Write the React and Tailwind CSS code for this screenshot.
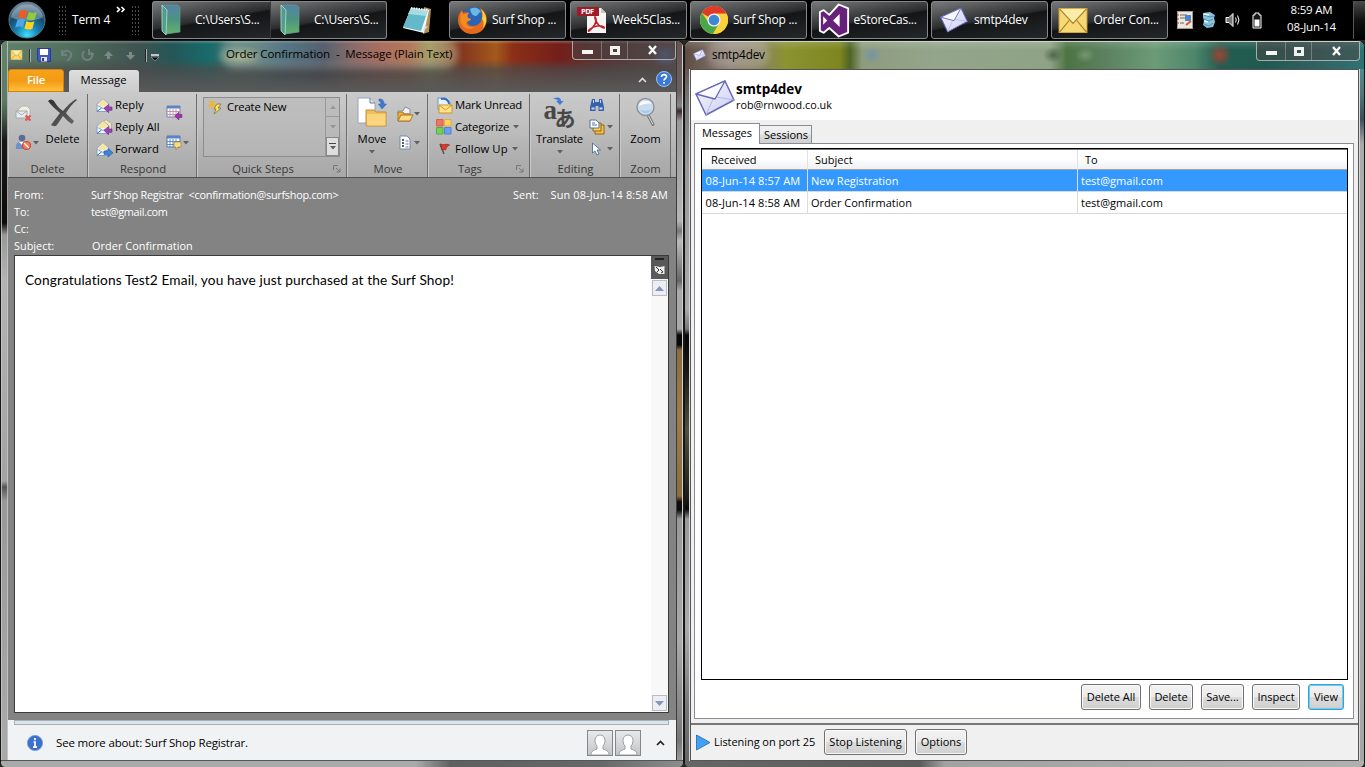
import React from "react";

const UI = "font-['Open_Sans','Noto_Sans',sans-serif]";

/* ---------- taskbar icons ---------- */

function StartOrb() {
  return (
    <svg width="38" height="38" viewBox="0 0 38 38" className="shrink-0">
      <defs>
        <radialGradient id="orb" cx="50%" cy="92%" r="85%">
          <stop offset="0" stopColor="#3fe0ff" />
          <stop offset="0.35" stopColor="#1786b8" />
          <stop offset="0.7" stopColor="#174a70" />
          <stop offset="1" stopColor="#6f8596" />
        </radialGradient>
      </defs>
      <circle cx="19" cy="19" r="18" fill="url(#orb)" stroke="#5d7688" />
      <path d="M3 16a16.500 16.500 0 0 1 32 0c-8 5-24 5-32 0z" fill="#dbe8ee" opacity="0.35" />
      <path d="M12 10c3-1.600 5-1.300 7.500.3l-2 7.500c-2.500-1.400-4.700-1.500-7.700-.2z" fill="#ef5a24" />
      <path d="M20.800 10.800c2.600 1.500 5 1.500 8 .2l-2 7.400c-3 1.300-5.400 1.200-8-.2z" fill="#95c93d" />
      <path d="M9.300 19c3-1.400 5.200-1.200 7.700.2l-2 7.500c-2.500-1.500-4.800-1.500-7.800 0z" fill="#4ea6e6" />
      <path d="M18.400 20c2.500 1.500 5 1.600 8 .2l-2 7.500c-3 1.300-5.300 1.100-8-.3z" fill="#ffd21f" />
    </svg>
  );
}

function FolderIcon() {
  return (
    <svg width="20" height="32" viewBox="0 0 20 32">
      <defs>
        <linearGradient id="fold" x1="0" y1="0" x2="0" y2="1">
          <stop offset="0" stopColor="#5583a6" />
          <stop offset="0.5" stopColor="#4b9481" />
          <stop offset="1" stopColor="#66b36d" />
        </linearGradient>
      </defs>
      <path d="M1 1l15 0 3 2v25l-14 2z" fill="url(#fold)" stroke="#5f9c94" strokeWidth="0.7" />
      <path d="M1 1l5 5-1 25-4-4z" fill="#4f9d8a" stroke="#b7e2d0" strokeWidth="0.8" />
    </svg>
  );
}

function NotepadIcon() {
  return (
    <svg width="32" height="30" viewBox="0 0 32 30">
      <path d="M23 2l7 2-2 23-6 2z" fill="#b58f58" />
      <path d="M10 3l18 2-5 23-21-5z" fill="#f4fafa" />
      <path d="M10 3l17 2-7 21-18-4z" fill="#63b8c9" />
      <path d="M10 3l17 2-2 6-18-2z" fill="#a9dbe4" />
      <path d="M22 27l1-5 4-1z" fill="#dbe2e2" />
      <path d="M10 3l17 2" stroke="#eef8f8" strokeWidth="2" strokeDasharray="1.500 1" />
    </svg>
  );
}

function FirefoxIcon() {
  return (
    <svg width="32" height="30" viewBox="0 0 32 30" className="-ml-px">
      <circle cx="17" cy="14" r="12" fill="#2b64b4" />
      <path d="M13 4c5-3 10 0 11 3-3 0-2 3-5 4-3 0-5-2-6-7z" fill="#69b8e4" />
      <path d="M23 3c6 4 8 10 6 16-2 7-8 10-14 10C7 29 1 23 1 15 1 10 3 7 5 5l1 3c2-1 4-1 6 0-2 2-2 3-1 5l3 1c-1 2-3 2-4 3 1 4 6 5 10 3 5-2 7-8 3-17z" fill="#e66a1e" />
      <path d="M24 4c6 5 7 13 2 19 1-4 1-7-1-9 1-4 1-7-1-10z" fill="#ffd13b" />
      <path d="M5 6l1 4c1-1 4-2 6-2-2 2-2 4-1 5l3 1c-1 2-4 2-5 4 1 4 5 5 9 4-5 4-12 1-14-4-1-4-1-8 1-12z" fill="#f38b25" />
    </svg>
  );
}

function PdfIcon() {
  return (
    <svg width="32" height="32" viewBox="0 0 32 32" className="-ml-[3px]">
      <path d="M11 4h14l5 5v20H11z" fill="#f7f4f4" />
      <path d="M25 4v5h5z" fill="#c9c6c6" />
      <rect x="1" y="3" width="22" height="9" fill="#9e1b27" />
      <text x="5" y="10.200" fontSize="7.500" fontWeight="700" fill="#fff" fontFamily="Open Sans, sans-serif" textLength="13">PDF</text>
      <path d="M13 27c-2 1 2-4 8-5s8 2 7 2-6-2-8-7-1-5 0-2-2 8-7 12z" fill="none" stroke="#c01f2b" strokeWidth="1.700" />
    </svg>
  );
}

function ChromeIcon() {
  return (
    <svg width="30" height="30" viewBox="0 0 30 30">
      <circle cx="15" cy="15" r="14" fill="#fbd13c" />
      <path d="M15 15L2.900 8A14 14 0 0 1 27.500 8.800H15z" fill="#e0392c" />
      <path d="M2.900 8A14 14 0 0 0 14 29l6.500-10.500L15 15 8.800 16.500z" fill="#4aa64a" />
      <path d="M15 8.800h12.500A14 14 0 0 1 14 29l6-10.500z" fill="#fbd13c" />
      <circle cx="15" cy="15" r="6.600" fill="#f3f3ef" />
      <circle cx="15" cy="15" r="5.300" fill="#3e87d6" />
    </svg>
  );
}

function VisualStudioIcon() {
  return (
    <svg width="32" height="35" viewBox="0 0 34 36" className="-ml-[2px] shrink-0">
      <path d="M22 1l10 4v26l-10 4-10-9-6 5-4-2V9l4-2 6 5z" fill="#68217a" stroke="#fff" strokeWidth="2" strokeLinejoin="round" />
      <path d="M23 11v14l-7-7zM5.500 13.500l4.300 4.500-4.300 4.500z" fill="#fff" />
    </svg>
  );
}

function Envelope({ w = 28, h = 26 }) {
  return (
    <svg width={w} height={h} viewBox="0 0 40 36">
      <defs>
        <linearGradient id="env" x1="0" y1="0" x2="1" y2="1">
          <stop offset="0" stopColor="#fafaff" />
          <stop offset="1" stopColor="#c9ccf3" />
        </linearGradient>
      </defs>
      <path d="M1 14L30 1l9 19L11 35z" fill="url(#env)" stroke="#6669b8" strokeWidth="1.500" strokeLinejoin="round" />
      <path d="M11 35l7-16M39 20l-18-3" stroke="#b3b5e2" strokeWidth="1" fill="none" />
      <path d="M1 14l19 5L30 1z" fill="#f9f9ff" stroke="#6669b8" strokeWidth="1.300" strokeLinejoin="round" />
    </svg>
  );
}

function YellowMail({ w = 27, h = 25 }) {
  return (
    <svg width={w} height={h} viewBox="0 0 30 26">
      <rect x="0.500" y="0.500" width="29" height="25" fill="#f6d874" stroke="#d9a93a" />
      <path d="M1 1h28L15 16z" fill="#fcecac" />
      <path d="M1 1l14 15L29 1M1 25l10-12M29 25L19 13" fill="none" stroke="#a97e22" strokeWidth="1.200" />
    </svg>
  );
}

function TaskButton({ icon, label, joined = false, left = false }) {
  return (
    <div
      className={
        "flex h-[38px] items-center border border-[#85888b] bg-[linear-gradient(170deg,#77797b_0%,#4b4d4f_28%,#2a2c2e_48%,#131517_52%,#25282a_100%)] " +
        (joined ? "w-[116px] rounded-r-[3px] border-l-0 pl-[9px]" : left ? "w-[119px] rounded-l-[3px] border-r-[#3a3c3e] pl-[8px]" : "w-[117px] rounded-[3px] pl-[8px]")
      }
    >
      <div className="flex w-[34px] shrink-0 items-center">{icon}</div>
      <span className="whitespace-nowrap">{label}</span>
    </div>
  );
}

function Grip() {
  return <div className="h-[30px] w-[9px] bg-[radial-gradient(circle,#4c4c4c_0.6px,transparent_0.9px)] bg-[size:3px_4px]" />;
}

function Taskbar() {
  return (
    <div className={`flex h-[40px] shrink-0 items-start bg-black pt-px text-[12px] tracking-[-0.22px] text-white ${UI}`}>
      <div className="flex w-[152px] items-center pl-[8px]">
        <StartOrb />
        <div className="ml-[12px]"><Grip /></div>
        <span className="ml-[5px] w-[42px] whitespace-nowrap text-[12px]">Term 4</span>
        <svg width="10" height="7" viewBox="0 0 10 7" className="mb-[21px] ml-[2px]">
          <path d="M1 1l2.500 2.500L1 6M5.500 1L8 3.500 5.500 6" fill="none" stroke="#fff" strokeWidth="1.700" />
        </svg>
        <div className="ml-[5px]"><Grip /></div>
      </div>
      <div className="flex">
        <TaskButton left icon={<FolderIcon />} label="C:\Users\S..." />
        <TaskButton joined icon={<FolderIcon />} label="C:\Users\S..." />
      </div>
      <div className="ml-[14px] mt-[4px] w-[47px]"><NotepadIcon /></div>
      <div className="flex gap-[3.500px]">
        <div className="ml-[1px]"><TaskButton icon={<FirefoxIcon />} label="Surf Shop ..." /></div>
        <TaskButton icon={<PdfIcon />} label="Week5Clas..." />
        <TaskButton icon={<ChromeIcon />} label="Surf Shop ..." />
        <TaskButton icon={<VisualStudioIcon />} label="eStoreCas..." />
        <TaskButton icon={<Envelope />} label="smtp4dev" />
        <div className="-ml-px"><TaskButton icon={<div className="-ml-[2px]"><YellowMail w={30} /></div>} label="Order Con..." /></div>
      </div>
      <div className="ml-[9px] mt-[9px] flex h-[20px] items-center gap-[8px]">
        <svg width="17" height="18" viewBox="0 0 17 18">
          <rect x="0.500" y="0.500" width="15" height="17" fill="#ebe8e3" stroke="#ad9787" />
          <path d="M3 4h7M3 7h5M3 12h4" stroke="#74684f" />
          <path d="M8 4h6v6H8z" fill="#4c86c9" />
          <path d="M9 14l5-4" stroke="#d85b31" strokeWidth="2" />
          <path d="M1 3v12" stroke="#b04329" strokeDasharray="2 2" />
        </svg>
        <svg width="16" height="18" viewBox="0 0 16 18" className="-ml-px">
          <path d="M2 2l7-1 5 3-1 3 1 4-2 5-6 1-4-3 1-4-1-4z" fill="#8ac2dd" />
          <path d="M3 4l6 2 4-1M3 8l5 2 4-2M3 13l5 2 4-3" stroke="#4e8fae" fill="none" />
          <path d="M3 3l5 1M3 10l4 1" stroke="#edfaff" strokeWidth="1.500" />
        </svg>
        <svg width="17" height="16" viewBox="0 0 17 16" fill="none" stroke="#fff">
          <path d="M1 5.500h3l4-4v13l-4-4H1z" fill="#777" />
          <path d="M10.500 5.500q1.500 2.500 0 5M12.500 3.500q3 4.500 0 9" />
        </svg>
        <svg width="12" height="17" viewBox="0 0 12 17" className="ml-[1px]">
          <path d="M4 1h4v2h2v13H2V3h2z" fill="#171717" stroke="#fff" />
          <path d="M3.500 7.500h5v7h-5z" fill="#fff" />
        </svg>
      </div>
      <div className="ml-[17px] w-[64px] text-center text-[11.500px] leading-[17px] tracking-[-0.220px]">
        <div>8:59 AM</div>
        <div>08-Jun-14</div>
      </div>
      <div className="ml-auto h-[38px] w-[12px] border-l border-[#55585a] bg-[linear-gradient(180deg,#4b4b4b,#111_50%,#000)]" />
    </div>
  );
}

/* ---------- window chrome ---------- */

function CaptionButtons() {
  return (
    <div className="flex h-[19px] w-[104px] rounded-b-[4px] border border-t-0 border-[#c9c5c1]/80 bg-[#4a4443]/50">
      <div className="flex w-[29px] items-center justify-center border-r border-[#aaa]/50 pt-[4px]">
        <div className="h-[4px] w-[11px] bg-[#f4f4f4]" />
      </div>
      <div className="flex w-[26px] items-center justify-center border-r border-[#aaa]/50">
        <div className="h-[9px] w-[10px] border-[3px] border-[#f1f1f1]" />
      </div>
      <div className="flex flex-1 items-center justify-center pl-px">
        <svg width="11" height="10" viewBox="0 0 11 10">
          <path d="M2 1l7 8M9 1L2 9" stroke="#f6f6f6" strokeWidth="2.400" />
        </svg>
      </div>
    </div>
  );
}

function Caret({ className = "" }) {
  return (
    <svg width="6" height="4" viewBox="0 0 6 4" className={className}>
      <path d="M0 0h6L3 3.500z" fill="#606060" />
    </svg>
  );
}

/* ---------- ribbon icons ---------- */

function MailAction({ forward = false, twice = false }) {
  return (
    <svg width="17" height="17" viewBox="0 0 17 17" className="shrink-0">
      {twice && <path d="M5 4l5-3.500 5.500 4v6H5z" fill="#f6e5a3" stroke="#8fa6c4" strokeWidth="0.800" />}
      <path d="M1 7l6-5 6 5v7.500H1z" fill="#f2f7fc" stroke="#7d9cc6" strokeWidth="0.900" />
      <path d="M3 6l4-4 4 4v3H3z" fill="#f9e69e" />
      <path d="M1.500 8.500L7 11.500l5.500-3" fill="none" stroke="#7d9cc6" strokeWidth="0.900" />
      <path d="M1 14.500l4.500-3.500" fill="none" stroke="#3e6fae" />
      {forward ? (
        <path d="M8 10h4V7.500l5 4.300-5 4.200v-2.500H8z" fill="#3c86dd" stroke="#1e58a5" strokeWidth="0.600" />
      ) : (
        <path d="M16 10h-3.500V7.500L8 11.500l4.500 4.200v-2.500H16z" fill="#a044b4" stroke="#6d1f80" strokeWidth="0.600" />
      )}
    </svg>
  );
}

function JunkMail() {
  return (
    <svg width="18" height="17" viewBox="0 0 18 17">
      <path d="M3 5l4-4 5 0 3 3v8H4z" fill="#f3efdf" stroke="#b5b5b5" />
      <path d="M1 6h11v7H1z" fill="#e9edf2" stroke="#a5a8ab" />
      <path d="M1 6l5.500 4L12 6" fill="none" stroke="#a5a8ab" />
      <path d="M10.500 10.500l5 5M15.500 10.500l-5 5" stroke="#d9574b" strokeWidth="2" />
    </svg>
  );
}

function BlockUser() {
  return (
    <svg width="16" height="17" viewBox="0 0 16 17">
      <circle cx="7" cy="4" r="3.300" fill="#5d6c95" />
      <path d="M1 15c-1-5 2-8 6-7s5 3 5 7z" fill="#6f8fce" />
      <path d="M4 8l3 3 2-3" fill="#fff" />
      <circle cx="11.500" cy="11.500" r="4" fill="#f07d55" stroke="#d4442a" strokeWidth="1.200" />
      <path d="M9 9l5 5" stroke="#fff" strokeWidth="1.300" />
    </svg>
  );
}

function BigX() {
  return (
    <svg width="31" height="29" viewBox="0 0 31 29">
      <defs>
        <linearGradient id="bigx" x1="0" y1="0" x2="1" y2="1">
          <stop offset="0" stopColor="#2f2f2f" />
          <stop offset="1" stopColor="#6a6a6a" />
        </linearGradient>
      </defs>
      <path d="M1 3c2-2 4-2 6 0 3 5 6 8 9 10 4-5 8-9 13-12l1 1c-5 4-8 8-11 13 2 3 5 5 8 8l-2 3c-4-2-6-5-9-8-2 3-4 6-6 9-2 2-4 1-6 0 3-4 6-8 9-12C8 11 4 7 1 3z" fill="url(#bigx)" />
    </svg>
  );
}

function CalendarIcon({ arrow }) {
  return (
    <svg width="17" height="17" viewBox="0 0 17 17">
      <path d="M1 2h13v11H1z" fill="#fff" stroke={arrow ? "#6c84bd" : "#4c74bd"} />
      <path d="M1 2h13v2.500H1z" fill="#5d83c7" />
      <path d="M4 5v8M7 5v8M10 5v8M1 7.500h13M1 10.500h13" stroke={arrow ? "#c893a8" : "#5d8ad0"} />
      {arrow ? (
        <path d="M16 10.500h-3V8l-4.500 4 4.500 4v-2.500h3z" fill="#9c36a4" stroke="#711b7d" strokeWidth="0.500" />
      ) : (
        <path d="M8 8h7v5h-3l-2 3v-3H8z" fill="#f7dd7c" stroke="#a8843a" strokeWidth="0.700" />
      )}
    </svg>
  );
}

function MoveIcon() {
  return (
    <svg width="32" height="31" viewBox="0 0 32 31">
      <path d="M2 1h12l5 5v20H2z" fill="#fff" stroke="#9aa5b5" />
      <path d="M14 1v5h5" fill="#dbe4ef" stroke="#657ca3" />
      <path d="M23 2c4 0 5 2 5 5h2.500L26 12l-3.500-5H25c0-2-1-3-2-3z" fill="#3d7bd4" stroke="#2258a9" strokeWidth="0.500" />
      <path d="M10 13h8l2 2h10v14H10z" fill="#f0bf5c" stroke="#c08f38" />
      <path d="M11 17h18.500v11.500H11z" fill="#fbd57d" />
    </svg>
  );
}

function OpenFolder() {
  return (
    <svg width="17" height="16" viewBox="0 0 17 16">
      <path d="M1 5h5l2-4 5 2v5H1z" fill="#eef3fa" stroke="#8e8e8e" />
      <path d="M1 6h5l1 2h6v7H1z" fill="#e8b043" stroke="#a97922" />
      <path d="M4 9h12l-3 6H1z" fill="#fcd988" stroke="#a97922" />
    </svg>
  );
}

function PageList() {
  return (
    <svg width="14" height="15" viewBox="0 0 14 15">
      <path d="M2 1h7l3 3v10H2z" fill="#fff" stroke="#7289ad" />
      <path d="M4 5h2M4 8h2M4 11h2" stroke="#222" strokeWidth="1.600" />
      <path d="M7.500 6h3M7.500 9h3M7.500 12h3" stroke="#65779a" />
    </svg>
  );
}

function MarkUnread() {
  return (
    <svg width="17" height="17" viewBox="0 0 17 17">
      <path d="M2 1h8l4 4v7H2z" fill="#e9f2fb" stroke="#6f91c0" />
      <path d="M5 2c5-1 8 2 8 5" fill="none" stroke="#2f6fc9" strokeWidth="2" />
      <path d="M3 8h13v8H3z" fill="#ffe38a" stroke="#cf9526" />
      <path d="M3 8l6.500 5L16 8" fill="none" stroke="#cf9526" />
    </svg>
  );
}

function Categorize() {
  return (
    <svg width="16" height="16" viewBox="0 0 16 16">
      <path d="M0.500 0.500h6.500v6.500h-6.500z" fill="#f27361" stroke="#d9604f" />
      <path d="M8.500 0.500h6.500v6.500h-6.500z" fill="#ffd25a" stroke="#e0ad47" />
      <path d="M0.500 8.500h6.500v6.500h-6.500z" fill="#76cf59" stroke="#57ad44" />
      <path d="M8.500 8.500h6.500v6.500h-6.500z" fill="#6d9ff1" stroke="#5583d8" />
    </svg>
  );
}

function FlagIcon() {
  return (
    <svg width="12" height="12" viewBox="0 0 12 12">
      <path d="M1 1l4 10" stroke="#555" strokeWidth="1.500" />
      <path d="M1.500 1c3 2 5-1 9 1-3 1-3 3-4 5-2-1-3 0-3.500 0z" fill="#dd3b28" stroke="#8e2318" strokeWidth="0.700" />
    </svg>
  );
}

function TranslateIcon() {
  return (
    <div className="relative h-[31px] w-[34px] text-[#474747]">
      <span className="absolute left-[1px] top-[2px] font-['Liberation_Serif',serif] text-[27px] font-bold leading-[22px]">a</span>
      <span className="absolute left-[12px] top-[9px] font-['Noto_Sans_CJK_JP',sans-serif] text-[21px] font-bold leading-[22px]">あ</span>
      <svg width="12" height="9" viewBox="0 0 12 9" className="absolute left-[10px] top-0">
        <path d="M0 2c5-3 8-1 8 2h2.500L7 8 3 4h2C4 2 2 2 0 2z" fill="#3e7dd8" />
      </svg>
    </div>
  );
}

function Binoculars() {
  return (
    <svg width="16" height="14" viewBox="0 0 16 14">
      <path d="M3 1h3v3h4V1h3l2 8v4H9.500V8h-3v5H1V9z" fill="#3761ae" />
      <path d="M2.500 9.500h3v2h-3zM10.500 9.500h3v2h-3zM4 2h1v3H4zM11 2h1v3h-1z" fill="#c9dcf7" />
    </svg>
  );
}

function PagesIcon() {
  return (
    <svg width="16" height="16" viewBox="0 0 16 16">
      <path d="M6 6h9v9H6z" fill="#f3bf4a" stroke="#8f6415" />
      <path d="M4 4h8v8H4z" fill="#f8cd5a" stroke="#8f6415" />
      <path d="M1 1h6l3 3v5H1z" fill="#fff" stroke="#56739f" />
      <path d="M3 4h3M3 6h5" stroke="#56739f" />
    </svg>
  );
}

function PointerIcon() {
  return (
    <svg width="12" height="14" viewBox="0 0 12 14">
      <path d="M1.500 1v10l2.500-2 2 4 2-1-2-4h3.500z" fill="#fff" stroke="#4a6b99" strokeWidth="0.900" />
    </svg>
  );
}

function ZoomGlass() {
  return (
    <svg width="24" height="31" viewBox="0 0 24 31">
      <path d="M14 18l5 9.500" stroke="#777" strokeWidth="3" strokeLinecap="round" />
      <path d="M14 18l5 9.500" stroke="#ddd" strokeWidth="1" />
      <circle cx="11.500" cy="10" r="8.500" fill="#c9ddef" stroke="#8b9199" strokeWidth="1.400" />
      <path d="M5 9c1-6 9-7 13-2-4-1-9 0-13 2z" fill="#fff" opacity="0.900" />
      <path d="M6 13c4 5 9 4 12-1-4 2-8 2-12 1z" fill="#a9c9e8" />
    </svg>
  );
}

function Launcher() {
  return (
    <svg width="8" height="8" viewBox="0 0 8 8" className="absolute bottom-[4px] right-[5px]">
      <path d="M0.500 5V0.500H5M3 3l4 4M7 3.500V7H3.500" fill="none" stroke="#777" />
    </svg>
  );
}

/* ---------- ribbon ---------- */

function Group({ label, width, children, launcher = false }) {
  return (
    <div className={`relative flex flex-col border-r border-r-[#6c6c6c] shadow-[inset_1px_0_0_#c9c9c9] ${width}`}>
      <div className="flex h-[67px]">{children}</div>
      <div className={`h-[17px] whitespace-nowrap pt-px text-center leading-[16px] text-[#373737] ${launcher ? "pr-[17px]" : ""}`}>{label}</div>
      {launcher && <Launcher />}
    </div>
  );
}

function BigButton({ icon, label, caret = false }) {
  return (
    <div className="flex flex-col items-center">
      <div className="flex h-[36px] items-center">{icon}</div>
      <span className="leading-[17px]">{label}</span>
      {caret && <Caret className="mt-[3px]" />}
    </div>
  );
}

function Row({ icon, label, caret = false }) {
  return (
    <div className="flex h-[22px] items-center whitespace-nowrap">
      <div className="flex w-[19px] shrink-0 items-center">{icon}</div>
      <span>{label}</span>
      {caret && <Caret className="ml-[4px]" />}
    </div>
  );
}

function Ribbon() {
  return (
    <div className="flex h-[86px] shrink-0 border-b border-[#505050] bg-[linear-gradient(180deg,#cacaca_0%,#bfbfbf_40%,#adadad_82%,#a8a8a8_100%)] pt-[2px] text-[11.300px] text-black">
      <Group label="Delete" width="w-[80px]">
        <div className="flex w-[34px] flex-col gap-[12px] pl-[7px] pt-[11px]">
          <JunkMail />
          <div className="flex items-center gap-[2px]"><BlockUser /><Caret /></div>
        </div>
        <div className="w-[41px]"><BigButton icon={<BigX />} label="Delete" /></div>
      </Group>
      <Group label={<span className="pl-[2px]">Respond</span>} width="w-[109px]">
        <div className="w-[77px] pl-[8px]">
          <Row icon={<MailAction />} label="Reply" />
          <Row icon={<MailAction twice />} label="Reply All" />
          <Row icon={<MailAction forward />} label="Forward" />
        </div>
        <div className="flex flex-col gap-[13px] pl-[1px] pt-[10px]">
          <CalendarIcon arrow />
          <div className="flex items-center"><CalendarIcon /><Caret /></div>
        </div>
      </Group>
      <Group label="Quick Steps" width="w-[150px]" launcher>
        <div className="ml-[6px] mt-[3px] flex h-[60px] w-[137px] border border-[#8d8d8d] bg-[#b8b8b8]/60">
          <div className="flex flex-1 items-start pl-[4px] pt-[1px]">
            <svg width="15" height="15" viewBox="0 0 15 15" className="mt-[1px]">
              <path d="M4 0v9M0 4.500h8M1 1l6 6M7 1L1 7" stroke="#f0b42e" strokeWidth="1.200" />
              <path d="M9 4h4l-3 4h3l-7 6 2-5H6z" fill="#ffe768" stroke="#877033" strokeWidth="0.800" />
            </svg>
            <span className="ml-[4px] leading-[15px] tracking-[-0.200px]">Create New</span>
          </div>
          <div className="grid w-[14px] grid-rows-3 border-l border-[#999]">
            <div className="flex items-center justify-center border-b border-[#999]"><Caret className="rotate-180 opacity-40" /></div>
            <div className="flex items-center justify-center"><Caret className="opacity-40" /></div>
            <div className="flex flex-col items-center justify-center gap-[2px] border border-[#888] bg-[#dedede]">
              <div className="h-px w-[7px] bg-[#444]" />
              <Caret />
            </div>
          </div>
        </div>
      </Group>
      <Group label={<span className="pl-[2px]">Move</span>} width="w-[81px]">
        <div className="w-[50px]"><BigButton icon={<MoveIcon />} label="Move" caret /></div>
        <div className="flex flex-col gap-[13px] pt-[12px]">
          <div className="flex items-center"><OpenFolder /><Caret /></div>
          <div className="flex items-center gap-[1px] pl-[1px]"><PageList /><Caret className="ml-[1px]" /></div>
        </div>
      </Group>
      <Group label="Tags" width="w-[102px]" launcher>
        <div className="pl-[8px]">
          <Row icon={<MarkUnread />} label={<span className="tracking-[-0.200px]">Mark Unread</span>} />
          <Row icon={<Categorize />} label={<span className="tracking-[-0.150px]">Categorize</span>} caret />
          <Row icon={<div className="pl-[3px]"><FlagIcon /></div>} label={<span className="tracking-[0.080px]">Follow Up</span>} caret />
        </div>
      </Group>
      <Group label={<span className="pl-[2px]">Editing</span>} width="w-[90px]">
        <div className="w-[58px] pl-[1px]"><BigButton icon={<TranslateIcon />} label={<span className="tracking-[-0.220px]">Translate</span>} caret /></div>
        <div className="flex flex-col gap-[7px] pl-[1px] pt-[4px]">
          <Binoculars />
          <div className="flex items-center gap-[2px]"><PagesIcon /><Caret /></div>
          <div className="flex items-center gap-[4px] pl-[2px]"><PointerIcon /><Caret /></div>
        </div>
      </Group>
      <Group label={<span className="pl-px">Zoom</span>} width="w-[51px]">
        <div className="w-full pl-px"><BigButton icon={<ZoomGlass />} label="Zoom" /></div>
      </Group>
    </div>
  );
}

function QuickAccess() {
  return (
    <div className="flex w-[218px] items-center pl-[2px]">
      <YellowMail w={13} h={10} />
      <div className="ml-[6px] h-[13px] w-[2px] border-l border-[#333] bg-[#aab]" />
      <svg width="14" height="14" viewBox="0 0 14 14" className="ml-[6px]">
        <path d="M0.500 0.500h13v13H2l-1.500-1.500z" fill="#4458c4" stroke="#2c3a93" />
        <path d="M3 1h8v6H3z" fill="#fff" />
        <path d="M4 9h6v4.500H4z" fill="#dfe3f5" />
        <path d="M5 10h2v3H5z" fill="#2c3a93" />
      </svg>
      <svg width="13" height="14" viewBox="0 0 13 14" className="ml-[9px]" fill="none" stroke="#71817e" strokeWidth="2">
        <path d="M2 6c4-6 10-3 9 2-1 3-3 4-4 5M2 2v5h5" />
      </svg>
      <svg width="13" height="14" viewBox="0 0 13 14" className="ml-[8px]" fill="none" stroke="#71817e" strokeWidth="2">
        <path d="M3 3C0 7 2 12 6 12s7-4 4-8M8 1v5h5" />
      </svg>
      <svg width="9" height="9" viewBox="0 0 9 9" className="ml-[10px]"><path d="M4.500 0L9 5H6v3H3V5H0z" fill="#7b8987" /></svg>
      <svg width="9" height="9" viewBox="0 0 9 9" className="ml-[13px]"><path d="M4.500 9L0 4h3V1h3v3h3z" fill="#7b8987" /></svg>
      <div className="ml-[10px] h-[13px] w-[2px] border-l border-[#222] bg-[#aab]" />
      <svg width="8" height="7" viewBox="0 0 8 7" className="ml-[4px] mt-[4px]">
        <path d="M0 1h8" stroke="#eee" strokeWidth="1.500" />
        <path d="M0 3h8L4 7z" fill="#111" stroke="#ccc" strokeWidth="0.500" />
      </svg>
    </div>
  );
}

function ScrollButton({ up = false }) {
  return (
    <div className="flex h-[16px] w-[15px] items-center justify-center border border-[#b9bcc2] bg-[#eceef4]">
      <svg width="9" height="5" viewBox="0 0 9 5" className={up ? "" : "rotate-180"}>
        <path d="M4.500 0L9 5H0z" fill="#8795bd" />
      </svg>
    </div>
  );
}

function Person() {
  return (
    <div className="flex h-[26px] w-[26px] items-end justify-center border border-[#85878b] bg-[linear-gradient(180deg,#e8e9ea,#c3c5c7)]">
      <svg width="24" height="23" viewBox="0 0 24 23">
        <path d="M3 23c0-4 3-5 6-6v-3c-3-3-3-11 3-11s6 8 3 11v3c3 1 6 2 6 6z" fill="#fff" stroke="#9b9da0" />
      </svg>
    </div>
  );
}

function Field({ name, value }) {
  return (
    <div className="flex h-[17px] items-center">
      <span className="w-[77px]">{name}</span>
      <span>{value}</span>
    </div>
  );
}

function MailWindow() {
  return (
    <div className={`flex w-[684px] shrink-0 flex-col overflow-hidden rounded-t-[7px] rounded-b-[5px] border-x border-t border-[#161616] bg-[#8f8f8f] ${UI}`}>
      <div className="flex min-h-0 flex-1">
        <div className="w-[7px] shrink-0 border-x border-[#c5c9c6]/80 bg-[linear-gradient(180deg,#66836c_0px,#5d7a63_60px,#405346_78px,#161616_100px,#0c0c0c_182px,#999_194px,#b3b3b3_240px,#a3a3a3_440px,#555_446px,#999_460px,#aaa_100%)]" />
        <div className="flex w-[668px] flex-col">
          {/* title bar and ribbon tabs sit on the same glass */}
          <div className="flex h-[51px] shrink-0 flex-col bg-[linear-gradient(180deg,rgba(255,255,255,0.25)_0px,transparent_3px,transparent_18px,rgba(75,75,75,0.75)_29px,#595959_51px),radial-gradient(ellipse_14px_12px_at_657px_14px,rgba(75,115,180,0.7),transparent),radial-gradient(ellipse_24px_12px_at_232px_16px,rgba(190,190,110,0.6),transparent),linear-gradient(90deg,#5f7f69_0px,#52705f_60px,#3f5350_130px,#245658_165px,#186b6b_200px,#3f6c66_225px,#3c6560_245px,#1f4a5c_275px,#1c2c3e_315px,#643a39_345px,#8e3f2a_375px,#9a4b25_400px,#87803a_422px,#84371f_455px,#a4591b_488px,#8c2f17_505px,#741f1a_550px,#563433_600px,#5a4a4b_668px)]">
            <div className="flex h-[28px]">
              <QuickAccess />
              <span className="mt-[3px] h-[19px] whitespace-nowrap rounded-full bg-white/25 text-[11.500px] leading-[20px] tracking-[-0.080px] text-black shadow-[0_0_7px_6px_rgba(255,255,255,0.25)]">
                Order Confirmation&nbsp; - &nbsp;Message (Plain Text)
              </span>
              <div className="ml-auto"><CaptionButtons /></div>
            </div>
            <div className="flex h-[23px] items-end">
              <div className="flex h-[23px] w-[56px] items-center justify-center rounded-t-[3px] border border-[#d9820b] bg-[linear-gradient(180deg,#f5a21b,#f39a14_50%,#ffbf3b)] pb-[2px] text-[11.500px] font-semibold tracking-[-0.300px] text-white">File</div>
              <div className="ml-[5px] flex h-[22px] w-[70px] items-center justify-center rounded-t-[3px] bg-[linear-gradient(180deg,#dedede,#cbcbcb)] pb-px pr-px text-[11.300px] text-black">Message</div>
              <svg width="9" height="6" viewBox="0 0 9 6" className="mb-[9px] ml-auto"><path d="M1 5l3.500-3.500L8 5" fill="none" stroke="#ddd" strokeWidth="1.600" /></svg>
              <svg width="16" height="16" viewBox="0 0 16 16" className="mb-[5px] ml-[9px] mr-[4px]">
                <circle cx="8" cy="8" r="7.500" fill="#3b78d3" stroke="#9fc3f3" />
                <path d="M5.500 6c0-3.500 5.300-3 5 0C10.300 7.500 8 7.700 8 9.600M8 11v1.800" fill="none" stroke="#fff" strokeWidth="1.700" />
              </svg>
            </div>
          </div>

          <Ribbon />

          <div className="flex min-h-0 flex-1 flex-col bg-[#838383] px-[6px] pt-[9px]">
            <div className="flex h-[68px] shrink-0 justify-between pr-[2px] text-[10.900px] text-white">
              <div>
                <Field name="From:" value={<span className="whitespace-nowrap tracking-[-0.280px]">Surf Shop Registrar &nbsp;&lt;confirmation@surfshop.com&gt;</span>} />
                <Field name="To:" value={<span className="tracking-[-0.320px]">test@gmail.com</span>} />
                <Field name="Cc:" value="" />
                <Field name="Subject:" value={<span className="pl-px tracking-[0.050px]">Order Confirmation</span>} />
              </div>
              <div className="flex h-[17px] items-center gap-[12px]">
                <span>Sent:</span>
                <span className="tracking-[0.150px]">Sun 08-Jun-14 8:58 AM</span>
              </div>
            </div>
            <div className="flex h-[458px] w-[655px] shrink-0 border border-[#3b3b3b] bg-white">
              <div className="flex-1 pl-[10px] pt-[14px] font-['Lato',sans-serif] text-[13.700px] leading-[19px] tracking-[0.110px] text-black [font-variant-ligatures:none]">
                Congratulations Test2 Email, you have just purchased at the Surf Shop!
              </div>
              <div className="flex w-[17px] flex-col items-center justify-between bg-[#f8f8f8] pb-px">
                <div className="flex flex-col items-center">
                  <div className="flex h-[23px] w-[17px] flex-col items-center bg-[#595959] pt-[2px]">
                    <div className="h-[2px] w-[9px] bg-[#222]" />
                    <svg width="12" height="10" viewBox="0 0 12 10" className="mt-[5px]">
                      <path d="M0.500 1l6 1 4-1v8H5L1 6z" fill="#eee" />
                      <path d="M2 2l3 3-2 2M6 4l3 3-2 1" fill="none" stroke="#333" />
                    </svg>
                  </div>
                  <div className="mt-px"><ScrollButton up /></div>
                </div>
                <ScrollButton />
              </div>
            </div>
          </div>

          <div className="flex h-[40px] shrink-0 flex-col bg-[#f1f2f4] px-[6px]">
            <div className="h-[5px] w-[655px] border border-[#a6b0bb] bg-[#dbe3eb]" />
            <div className="flex flex-1 items-center pl-[13px] text-[11.500px] tracking-[-0.160px] text-black">
              <svg width="16" height="16" viewBox="0 0 16 16">
                <circle cx="8" cy="8" r="7.600" fill="#3b71cc" stroke="#6e98dc" strokeWidth="0.800" />
                <path d="M8 3v2.200M6.500 7H8v5M6 12.200h4" fill="none" stroke="#fff" strokeWidth="1.700" />
              </svg>
              <span className="ml-[13px]">See more about: Surf Shop Registrar.</span>
              <div className="ml-auto flex gap-[2px]"><Person /><Person /></div>
              <svg width="9" height="6" viewBox="0 0 9 6" className="ml-[15px] mr-[5px]"><path d="M1 5l3.500-3.500L8 5" fill="none" stroke="#222" strokeWidth="1.700" /></svg>
            </div>
          </div>
        </div>
        <div className="w-[7px] shrink-0 border-l border-r border-l-[#3c3c3c] border-r-[#d0d0d0] bg-[linear-gradient(180deg,#6a5350_0px,#6a6160_50px,#888_65px,#3a2a2a_70px,#999_80px,#b5b5b5_180px,#777_190px,#bbb_200px,#666_240px,#aaa_250px,#aaa_288px,#080808_294px,#080808_304px,#8c6d3e_309px,#a07c49_375px,#8c6d3e_455px,#110a05_461px,#0c0c0c_469px,#999_478px,#aaa_600px,#777_700px,#9a9a9a_100%)]" />
      </div>
      <div className="h-[7px] shrink-0 border-t border-[#555] bg-[linear-gradient(90deg,#a9a9a9_0px,#a9a9a9_415px,#5f5f5f_450px,#686868_600px,#8e8e8e_684px)]" />
    </div>
  );
}

/* ---------- smtp4dev window ---------- */

function Button({ children, width, focused = false }) {
  return (
    <div
      className={
        "flex h-[26px] items-center justify-center whitespace-nowrap rounded-[3px] border bg-[linear-gradient(180deg,#f2f2f2_0%,#ebebeb_48%,#dcdcdc_50%,#cfcfcf_100%)] " +
        (focused ? "border-[#3c9fcf] shadow-[inset_0_0_0_1px_#66cdf5] " : "border-[#707070] shadow-[inset_0_0_0_1px_#fafafa] ") +
        width
      }
    >
      {children}
    </div>
  );
}

function MessageRow({ received, subject, to, selected = false }) {
  return (
    <div className={`grid h-[22px] grid-cols-[106px_270px_1fr] border-b border-[#d9d9d9] leading-[21px] ${selected ? "bg-[#3399ff] text-white" : "bg-white text-black"}`}>
      <span className="whitespace-nowrap border-r border-[#dcdcdc] pl-[3.500px] tracking-[0.100px]">{received}</span>
      <span className="border-r border-[#dcdcdc] pl-[3px]">{subject}</span>
      <span className="pl-[3px]">{to}</span>
    </div>
  );
}

function SmtpWindow() {
  return (
    <div className={`flex w-[681px] shrink-0 flex-col overflow-hidden rounded-t-[7px] rounded-b-[5px] border border-b-0 border-[#161616] bg-[#919191] text-[11px] text-black ${UI}`}>
      <div className="flex h-[28px] shrink-0 border-t border-[#c9d6c9] bg-[linear-gradient(180deg,rgba(255,255,255,0.15),transparent_30%),radial-gradient(ellipse_12px_12px_at_535px_13px,rgba(170,65,50,0.9),transparent),radial-gradient(ellipse_10px_9px_at_187px_13px,rgba(110,145,175,0.8),transparent),radial-gradient(ellipse_10px_8px_at_368px_13px,rgba(60,80,55,0.7),transparent),radial-gradient(ellipse_10px_8px_at_400px_13px,rgba(140,170,130,0.6),transparent),linear-gradient(90deg,#5d4c42_0px,#8a7d70_45px,#87805e_75px,#8b9331_100px,#7d8620_155px,#4f6425_165px,#8e9c7e_177px,#93a58b_250px,#8ea385_365px,#4d7443_382px,#5b8160_420px,#6c9b77_470px,#4d866b_510px,#245c50_535px,#1f5a50_580px,#30605f_625px,#2f7374_681px)]">
        <div className="ml-[8px] mt-[7px]"><Envelope w={13} h={12} /></div>
        <span className="ml-[6px] mt-[3px] h-[18px] rounded-full bg-white/20 text-[11.700px] leading-[19px] tracking-[-0.150px] shadow-[0_0_6px_5px_rgba(255,255,255,0.2)]">smtp4dev</span>
        <div className="ml-auto mr-[4px]"><CaptionButtons /></div>
      </div>
      <div className="flex min-h-0 flex-1">
        <div className="w-[5px] shrink-0 border-r border-[#d8d8d8] bg-[linear-gradient(180deg,#6a5350_0px,#777_30px,#999_100px,#aaa_240px,#777_260px,#080808_266px,#171713_300px,#50513f_360px,#1c1c16_430px,#080808_440px,#999_450px,#aaa_560px,#777_640px,#666_100%)]" />
        <div className="flex w-[669px] flex-col border border-[#555] bg-[#f0f0f0]">
          <div className="flex h-[50px] shrink-0 bg-white pl-[4px]">
            <div className="pt-[10px]"><Envelope w={40} h={36} /></div>
            <div className="pl-px pt-[10px]">
              <div className="text-[13.500px] font-bold leading-[18px] tracking-[-0.050px]">smtp4dev</div>
              <div className="text-[10.800px] leading-[14px]">rob@rnwood.co.uk</div>
            </div>
          </div>
          <div className="flex h-[23px] shrink-0 items-end pl-[3px]">
            <div className="relative z-10 -mb-px flex h-[21px] w-[66px] items-center justify-center border border-b-0 border-[#898c95] bg-white pb-[1px]">Messages</div>
            <div className="flex h-[18px] w-[52px] items-center justify-center border border-b-0 border-l-0 border-[#898c95] bg-[linear-gradient(180deg,#f2f2f2_0%,#ebebeb_48%,#dddddd_52%,#cfcfcf_100%)] pl-px pt-px">Sessions</div>
          </div>
          <div className="ml-[3px] flex h-[576px] w-[660px] shrink-0 flex-col border border-[#898c95] bg-white px-[6px] pt-[4px]">
            <div className="flex h-[532px] w-[647px] flex-col border border-black">
              <div className="grid h-[21px] shrink-0 grid-cols-[106px_270px_1fr] border-b border-t border-b-[#a5a5a5] border-t-[#777] bg-[linear-gradient(180deg,#fff_45%,#eef0f4)] leading-[20px]">
                <span className="border-r border-[#dfe1e6] pl-[9px]">Received</span>
                <span className="border-r border-[#dfe1e6] pl-[7px]">Subject</span>
                <span className="pl-[7px]">To</span>
              </div>
              <MessageRow selected received="08-Jun-14 8:57 AM" subject="New Registration" to="test@gmail.com" />
              <MessageRow received="08-Jun-14 8:58 AM" subject="Order Confirmation" to="test@gmail.com" />
            </div>
            <div className="flex justify-end gap-[8px] pr-[3px] pt-[4px]">
              <Button width="w-[60px]">Delete All</Button>
              <Button width="w-[44px]">Delete</Button>
              <Button width="w-[43px]">Save...</Button>
              <Button width="w-[48px]">Inspect</Button>
              <Button width="w-[36px]" focused>View</Button>
            </div>
          </div>
          <div className="mt-[4px] flex flex-1 items-center border-t-2 border-[#777] pb-px pl-[5px]">
            <svg width="15" height="17" viewBox="0 0 15 17">
              <path d="M0.500 1l13.500 7.500L0.500 16z" fill="#3ea0f6" stroke="#3a78b8" />
            </svg>
            <span className="ml-[3px] w-[110px] tracking-[-0.060px]">Listening on port 25</span>
            <Button width="w-[83px]">Stop Listening</Button>
            <div className="ml-[8px]"><Button width="w-[52px]">Options</Button></div>
          </div>
        </div>
        <div className="flex-1 border-l border-[#d8d8d8] bg-[linear-gradient(180deg,#4f8a8d_0px,#51777d_25px,#3b4d5b_50px,#aaa_75px,#b5b5b5_300px,#a5a5a5_100%)]" />
      </div>
      <div className="h-[6px] shrink-0 bg-[linear-gradient(90deg,#666_0px,#5c5c5c_235px,#a2a2a2_260px,#b0b0b0_681px)]" />
    </div>
  );
}

export default function App() {
  return (
    <div className="flex h-[767px] w-[1365px] flex-col overflow-hidden bg-black">
      <Taskbar />
      <div className="flex min-h-0 flex-1 bg-[#2b2826]">
        <MailWindow />
        <SmtpWindow />
      </div>
    </div>
  );
}
